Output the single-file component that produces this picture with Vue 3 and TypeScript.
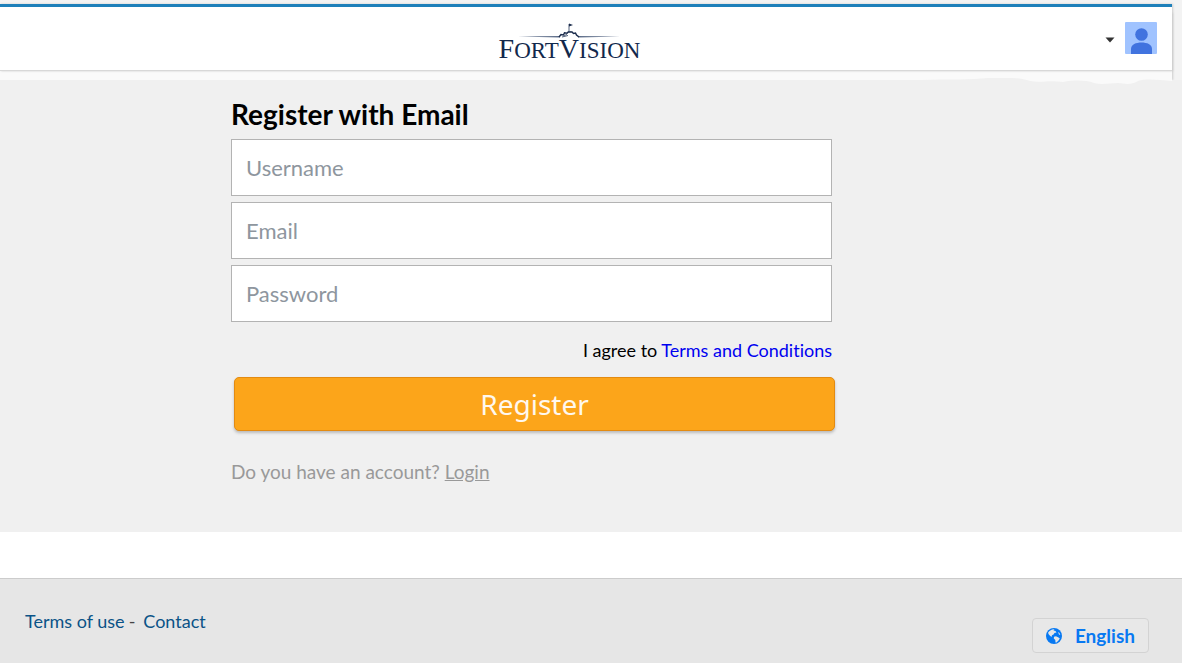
<script setup lang="ts">
import { ref } from 'vue'

interface Field {
  id: string
  type: string
  placeholder: string
}

const fields: Field[] = [
  { id: 'username', type: 'text', placeholder: 'Username' },
  { id: 'email', type: 'email', placeholder: 'Email' },
  { id: 'password', type: 'password', placeholder: 'Password' },
]

const values = ref<Record<string, string>>({ username: '', email: '', password: '' })
</script>

<template>
  <div class="page">
    <div class="top">
      <header class="header">
        <a class="logo" href="#" aria-label="FortVision">
          <svg class="fort" viewBox="0 0 104 16" aria-hidden="true">
            <path d="M0 13.500 L42 13 L42 14.600 Z M60 13 L102 13.500 L60 14.600 Z" fill="#5d6d89" />
            <path d="M41 14 L43 11.500 L45.500 12 L46.500 9.800 L49 10.300 L50.500 8.800 L54 9 L55.500 10.500 L57.500 10 L58.500 12 L61 14" fill="none" stroke="#1b2c4c" stroke-width="1.500" />
            <path d="M44 14 L50 12.500 M46 13 L49 11 M51 9 V1" fill="none" stroke="#53617b" stroke-width="1" />
            <path d="M51 0.500 L55 2 L51 3.500 Z" fill="#1b2c4c" />
          </svg>
          <span class="wordmark"><span class="cap">F</span>ORT<span class="cap">V</span>ISION</span>
        </a>
        <button class="account" type="button" aria-label="Account menu">
          <svg class="caret" viewBox="0 0 10 10" aria-hidden="true"><path d="M0.500 4.500 H9.500 L5 9.500 Z" fill="#333" /></svg>
          <svg class="avatar" viewBox="0 0 32 32" aria-hidden="true">
            <rect width="32" height="32" rx="1" fill="#a0c3ff" />
            <circle cx="16.500" cy="12.500" r="6.300" fill="#4173df" />
            <path d="M6 32 V27 C6 22.500 11 20.500 16.500 20.500 S27 22.500 27 27 V32 Z" fill="#4173df" />
          </svg>
        </button>
      </header>
      <svg class="edge" viewBox="0 0 262 12" aria-hidden="true">
        <rect y="4" width="252" height="8" fill="#f0f0f0" />
        <path d="M0 3 H252 V7 C240 6 226 4 218 7 C211 11 206 10 198 9 C190 9 182 11 174 9 C165 6 155 6 143 8 C130 6 120 9 110 7 C100 3 90 4 68 4 C50 6 30 5 0 6 Z" fill="#fafafa" />
      </svg>
    </div>

    <main class="main">
      <form class="form" @submit.prevent>
        <h1>Register with Email</h1>
        <div class="fields">
          <input
            v-for="field in fields"
            :id="field.id"
            :key="field.id"
            v-model="values[field.id]"
            :type="field.type"
            :placeholder="field.placeholder"
            :aria-label="field.placeholder"
          />
        </div>
        <p class="agree">I agree to <a href="#">Terms and Conditions</a></p>
        <button class="submit" type="submit">Register</button>
        <p class="login">Do you have an account? <a href="#">Login</a></p>
      </form>
    </main>

    <footer class="footer">
      <nav class="links">
        <a href="#">Terms of use</a><span class="dash">-</span><a href="#">Contact</a>
      </nav>
      <button class="language" type="button">
        <svg class="globe" viewBox="0 0 16 16" aria-hidden="true">
          <circle cx="8" cy="8" r="8" fill="#0879f2" />
          <path d="M3.500 3 L6 1.500 L8.500 1.200 L7.500 2.500 L9.500 3 L10.500 4.500 L8.500 5 L7.500 6.500 L6 7.200 L5.500 9 L4 7.800 L2.800 6.500 L2 4.800 Z M8 8.800 L10 8.300 L12.500 9.500 L13.800 10.500 L12.500 12.500 L10.500 14.500 L9.500 14.500 L9.300 12 L7.800 10.500 Z M12 4 L13.500 5 L14.300 7 L13 6.500 Z" fill="#e6e6e6" />
        </svg>
        English
      </button>
    </footer>
  </div>
</template>

<style>
body {
  margin: 0;
  background: #fff;
}
</style>

<style scoped>
.page {
  display: flex;
  flex-direction: column;
  min-height: 100vh;
  font-family: Lato, "Open Sans", sans-serif;
  font-size: 18px;
  line-height: 24px;
  font-variant-ligatures: none;
}

.page *,
.page {
  box-sizing: border-box;
}

.top {
  position: relative;
  height: 80px;
  padding: 4px 10px 0 0;
  background: #f3f3f3;
}

.header {
  display: grid;
  grid-template-columns: 1fr auto 1fr;
  align-items: start;
  height: 67px;
  padding-right: 15px;
  border-top: 3px solid #1e80ba;
  border-bottom: 1px solid #d8d8d8;
  background: #fff;
  box-shadow: 1px 0 2px #ccc, 0 9px 0 #fafafa, 1px 9px 2px #ccc;
}

.logo {
  grid-column: 2;
  display: flex;
  flex-direction: column;
  align-items: center;
  margin-top: 16px;
  margin-left: -18px;
  color: #12284c;
  text-decoration: none;
}

.fort {
  display: block;
  width: 104px;
  height: 16px;
}

.wordmark {
  font-family: "Liberation Serif", serif;
  font-size: 23px;
  line-height: 19px;
}

.cap {
  font-size: 28px;
}

.account {
  justify-self: end;
  display: flex;
  align-items: center;
  gap: 10px;
  margin-top: 15px;
  padding: 0;
  border: 0;
  background: none;
}

.caret {
  width: 10px;
  height: 10px;
}

.avatar {
  width: 32px;
  height: 32px;
}

.edge {
  position: absolute;
  z-index: 2;
  right: 0;
  bottom: -6px;
  width: 262px;
  height: 12px;
}

.main {
  position: relative;
  z-index: 1;
  padding: 18px 24px 48px 231px;
  background: #f0f0f0;
}

.top {
  z-index: auto;
}

.form {
  max-width: 601px;
}

h1 {
  margin: 0 0 9px;
  font-size: 28px;
  font-weight: 700;
  line-height: 32px;
  color: #000;
}

.fields {
  display: flex;
  flex-direction: column;
  gap: 6px;
}

.fields input {
  width: 100%;
  height: 57px;
  padding: 0 14px;
  border: 1px solid #b3b3b3;
  border-radius: 0;
  background: #fff;
  font: 22px/28px Lato, "Open Sans", sans-serif;
}

.fields input::placeholder {
  color: #8e969e;
  opacity: 1;
}

.agree {
  margin: 16px 0 15px;
  text-align: right;
  color: #000;
}

.agree a {
  color: #0000f0;
  text-decoration: none;
}

.submit {
  display: block;
  width: 100%;
  height: 54px;
  margin-left: 3px;
  padding: 0;
  border: 1px solid #e38b12;
  border-radius: 5px;
  background: #fca51a;
  box-shadow: 0 2px 3px #bbb;
  color: #fff8ee;
  font: 28px/40px "Noto Sans", "Open Sans", sans-serif;
}

.login {
  margin: 29px 0 0;
  font-size: 19px;
  color: #999;
}

.login a {
  color: inherit;
}

.footer {
  display: flex;
  flex: 1;
  align-items: flex-start;
  justify-content: space-between;
  margin-top: 46px;
  padding: 30px 33px 10px 25px;
  border-top: 1px solid #ccc;
  background: #e6e6e6;
}

.links {
  color: #444;
}

.links a {
  color: #0b5387;
  text-decoration: none;
}

.dash {
  margin: 0 8px 0 4px;
}

.language {
  display: flex;
  align-items: center;
  gap: 13px;
  height: 35px;
  margin-top: 9px;
  padding: 0 13px;
  border: 1px solid #d3d3d3;
  border-radius: 4px;
  background: #e8e8e8;
  color: #0879f2;
  font: 700 19px/24px Lato, "Open Sans", sans-serif;
}

.globe {
  width: 16px;
  height: 16px;
}
</style>
